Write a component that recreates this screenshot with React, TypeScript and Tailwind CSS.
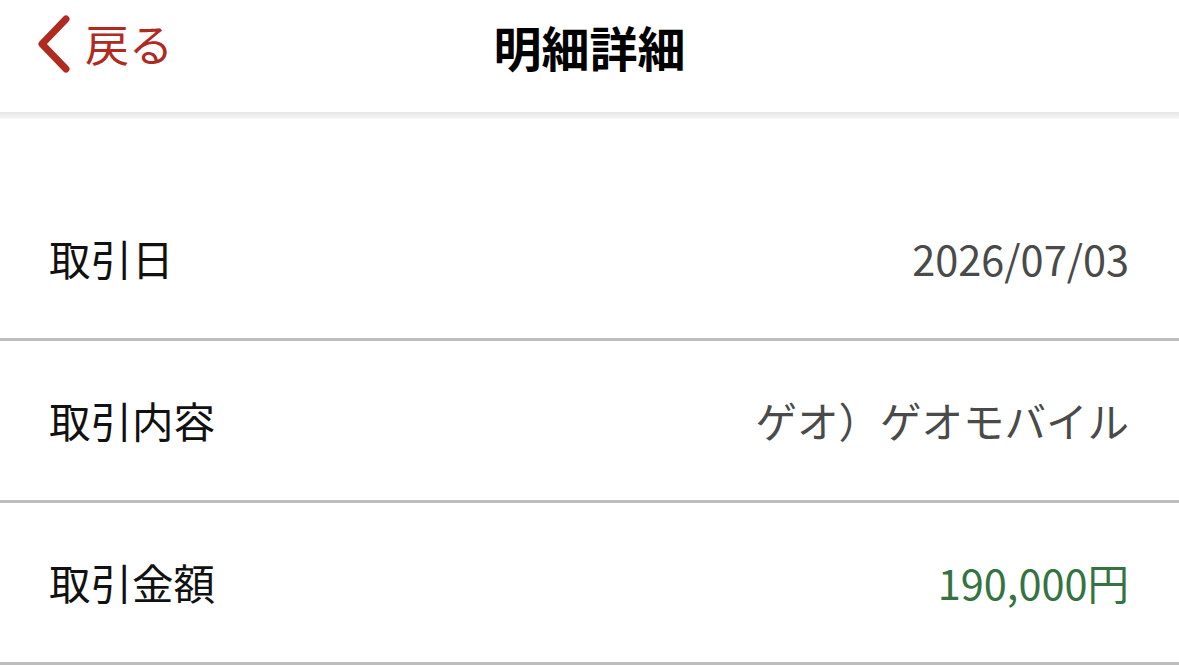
import React from "react";

const rows = [
  { label: "取引日", value: "2026/07/03", color: "text-[#4a4a4a]" },
  { label: "取引内容", value: "ゲオ）ゲオモバイル", color: "text-[#4a4a4a]" },
  { label: "取引金額", value: "190,000円", color: "text-[#357343]" },
];

export default function App() {
  return (
    <div
      className="w-[1179px] h-[665px] overflow-hidden bg-white"
      style={{ fontFamily: '"Noto Sans CJK JP", "Noto Sans", sans-serif' }}
    >
      <header className="relative h-[112px] flex items-start justify-center bg-white pt-[22px]">
        <button className="absolute left-[36px] top-[14px] flex items-center gap-[13px] text-[#b02a1f]">
          <svg width="36" height="60" viewBox="0 0 36 60" fill="none">
            <path d="M30 5 L6 30 L30 55" stroke="#b02a1f" strokeWidth="7" strokeLinecap="round" strokeLinejoin="round" />
          </svg>
          <span className="text-[44px] leading-none -mt-[3px]">戻る</span>
        </button>
        <h1 className="text-[48px] font-bold text-black leading-none">明細詳細</h1>
      </header>
      <div className="h-[7px] bg-gradient-to-b from-[#e6e6e6] to-[#f7f7f7]" />
      <div className="h-[60px]" />
      {rows.map((r) => (
        <div key={r.label} className="h-[162px] flex items-center justify-between pl-[49px] pr-[50px] border-b-[3px] border-[#bdbdbd]">
          <span className="text-[41.5px] text-[#111] leading-none">{r.label}</span>
          <span className={`text-[41.5px] leading-none ${r.color}`}>{r.value}</span>
        </div>
      ))}
    </div>
  );
}
